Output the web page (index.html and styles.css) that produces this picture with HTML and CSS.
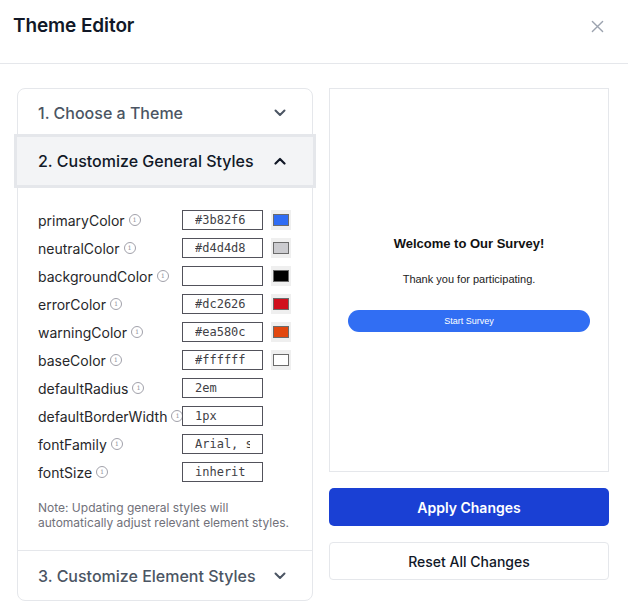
FILE: index.html
```html
<!DOCTYPE html>
<html>
<head>
<meta charset="utf-8">
<link rel="stylesheet" href="styles.css">
</head>
<body>
<div class="dialog">
  <header class="head">
    <h1 class="title">Theme Editor</h1>
    <button class="close" aria-label="Close">
      <svg width="14" height="14" viewBox="0 0 14 14"><path d="M1.5 1.5L12.5 12.5M12.5 1.5L1.5 12.5" stroke="#9ca3af" stroke-width="1.5" stroke-linecap="round"/></svg>
    </button>
  </header>
  <main class="body">
    <section class="accordion">
      <div class="acc-head">
        <span>1. Choose a Theme</span>
        <svg class="chev" width="12" height="8" viewBox="0 0 12 8"><path d="M1.5 1.5L6 6L10.5 1.5" fill="none" stroke="#4b5563" stroke-width="2" stroke-linecap="round" stroke-linejoin="round"/></svg>
      </div>
      <div class="acc-head active">
        <span>2. Customize General Styles</span>
        <svg class="chev" width="12" height="8" viewBox="0 0 12 8"><path d="M1.5 6.5L6 2L10.5 6.5" fill="none" stroke="#111827" stroke-width="2.2" stroke-linecap="round" stroke-linejoin="round"/></svg>
      </div>
      <div class="acc-body">
        <div class="rows">
          <div class="row"><label class="lbl">primaryColor<i class="info">i</i></label><input class="field" value="#3b82f6"><span class="swatch"><span class="sw-in sw-blue"></span></span></div>
          <div class="row"><label class="lbl">neutralColor<i class="info">i</i></label><input class="field" value="#d4d4d8"><span class="swatch"><span class="sw-in sw-neutral"></span></span></div>
          <div class="row"><label class="lbl">backgroundColor<i class="info">i</i></label><input class="field" value=""><span class="swatch"><span class="sw-in sw-black"></span></span></div>
          <div class="row"><label class="lbl">errorColor<i class="info">i</i></label><input class="field" value="#dc2626"><span class="swatch"><span class="sw-in sw-red"></span></span></div>
          <div class="row"><label class="lbl">warningColor<i class="info">i</i></label><input class="field" value="#ea580c"><span class="swatch"><span class="sw-in sw-orange"></span></span></div>
          <div class="row"><label class="lbl">baseColor<i class="info">i</i></label><input class="field" value="#ffffff"><span class="swatch"><span class="sw-in sw-white"></span></span></div>
          <div class="row"><label class="lbl">defaultRadius<i class="info">i</i></label><input class="field" value="2em"></div>
          <div class="row"><label class="lbl">defaultBorderWidth<i class="info">i</i></label><input class="field" value="1px"></div>
          <div class="row"><label class="lbl">fontFamily<i class="info">i</i></label><input class="field" value="Arial, sans-serif"></div>
          <div class="row"><label class="lbl">fontSize<i class="info">i</i></label><input class="field" value="inherit"></div>
        </div>
        <p class="note">Note: Updating general styles will automatically adjust relevant element styles.</p>
      </div>
      <div class="acc-head last">
        <span>3. Customize Element Styles</span>
        <svg class="chev" width="12" height="8" viewBox="0 0 12 8"><path d="M1.5 1.5L6 6L10.5 1.5" fill="none" stroke="#4b5563" stroke-width="2" stroke-linecap="round" stroke-linejoin="round"/></svg>
      </div>
    </section>
    <aside class="side">
      <div class="preview">
        <h2 class="pv-title">Welcome to Our Survey!</h2>
        <p class="pv-text">Thank you for participating.</p>
        <button class="pv-btn">Start Survey</button>
      </div>
      <button class="btn-apply">Apply Changes</button>
      <button class="btn-reset">Reset All Changes</button>
    </aside>
  </main>
</div>
</body>
</html>
```
FILE: styles.css
```css
* { box-sizing: border-box; }
html, body { margin: 0; padding: 0; background: #fff; }
body { font-family: Inter, "Noto Sans", sans-serif; color: #111827; }

.dialog { width: 628px; height: 612px; }

.head {
  height: 64px;
  display: flex;
  align-items: flex-start;
  justify-content: space-between;
  padding: 13px 24px 0 13px;
  border-bottom: 1px solid #e5e7eb;
}
.title { margin: 0; font-size: 19px; font-weight: 600; line-height: 26px; color: #111827; letter-spacing: -0.1px; }
.close { border: 0; background: none; padding: 0; margin-top: 7px; width: 13px; height: 13px; display: flex; }
.close svg { width: 13px; height: 13px; }

.body {
  display: grid;
  grid-template-columns: 296px 280px;
  column-gap: 16px;
  padding: 24px 19px 0 17px;
  align-items: start;
}

.accordion {
  border: 1px solid #e5e7eb;
  border-radius: 8px;
  height: 513px;
  display: flex;
  flex-direction: column;
}
.acc-head {
  height: 48px;
  display: flex;
  align-items: center;
  justify-content: space-between;
  padding: 0 26px 0 20px;
  font-size: 16px;
  font-weight: 500;
  color: #4b5563;
}
.acc-head.active {
  background: #f3f4f6;
  color: #111827;
  box-shadow: 0 0 0 3px #e5e7eb;
  margin: 0 -1px;
  padding-left: 21px;
  padding-right: 27px;
}
.acc-head.last {
  border-top: 1px solid #e5e7eb;
  height: 50px;
  margin-top: auto;
}
.chev { display: block; }

.acc-body { padding: 25px 20px 0 20px; }
.rows { display: flex; flex-direction: column; gap: 8px; }
.row { display: flex; align-items: center; height: 20px; }
.lbl {
  width: 144px;
  flex: none;
  font-size: 14px;
  color: #27272a;
  display: flex;
  align-items: center;
  white-space: nowrap;
}
.info {
  font-style: normal;
  width: 12px; height: 12px;
  border: 1px solid #a1a1aa;
  border-radius: 50%;
  font-size: 8px;
  line-height: 10px;
  text-align: center;
  color: #a1a1aa;
  margin-left: 4px;
  font-family: "DejaVu Serif", serif;
  flex: none;
}
.field {
  width: 81px;
  height: 20px;
  border: 1px solid #52525b;
  border-radius: 0;
  padding: 0 12px;
  font-family: "DejaVu Sans Mono", monospace;
  font-size: 12px;
  color: #3f3f46;
  background: #fff;
  outline: none;
}
.swatch {
  width: 20px; height: 20px;
  margin-left: 8px;
  background: #efefef;
  display: flex;
  align-items: center;
  justify-content: center;
}
.sw-in { width: 16px; height: 12px; border: 1px solid #6b6b6b; }
.sw-blue { background: #2f6cf4; }
.sw-neutral { background: #cbcbcf; }
.sw-black { background: #000; }
.sw-red { background: #d0101e; }
.sw-orange { background: #e2470f; }
.sw-white { background: #fff; }

.note {
  margin: 18px 0 0;
  font-size: 12px;
  line-height: 15px;
  color: #71717a;
}

.side { display: flex; flex-direction: column; }
.preview {
  height: 384px;
  border: 1px solid #e5e7eb;
  display: flex;
  flex-direction: column;
  align-items: center;
  padding: 147px 19px 0;
  font-family: "Liberation Sans", Arial, sans-serif;
}
.pv-title { margin: 0; font-size: 13px; line-height: 16px; font-weight: 700; color: #111; }
.pv-text { margin: 20px 0 0; font-size: 11px; line-height: 14px; color: #222; }
.pv-btn {
  margin-top: 24px;
  width: 242px;
  height: 22px;
  border: 0;
  border-radius: 11px;
  background: #316ef3;
  color: #fff;
  font-family: "Liberation Sans", Arial, sans-serif;
  font-size: 9px;
}
.btn-apply {
  margin-top: 16px;
  height: 38px;
  border: 0;
  border-radius: 5px;
  background: #1a40d4;
  color: #fff;
  font-family: Inter, sans-serif;
  font-size: 14px;
  font-weight: 600;
}
.btn-reset {
  margin-top: 16px;
  height: 38px;
  border: 1px solid #e5e7eb;
  border-radius: 4px;
  background: #fff;
  color: #111827;
  font-family: Inter, sans-serif;
  font-size: 14px;
  font-weight: 500;
}
```
